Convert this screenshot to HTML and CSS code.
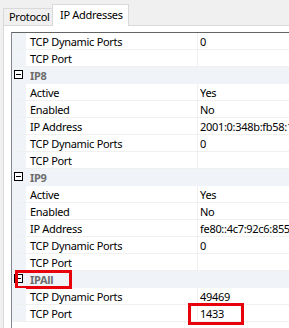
FILE: index.html
```html
<!DOCTYPE html>
<html>
<head>
<meta charset="utf-8">
<link rel="stylesheet" href="styles.css">
</head>
<body>
<div class="tabs">
  <div class="tab">Protocol</div>
  <div class="tab active">IP Addresses</div>
</div>
<div class="panel">
  <div class="grid">
    <div class="row"><div class="margin"></div><div class="name">TCP Dynamic Ports</div><div class="value">0</div></div>
    <div class="row"><div class="margin"></div><div class="name">TCP Port</div><div class="value"></div></div>
    <div class="row cat"><div class="margin"><span class="minus"></span></div><div class="name">IP8</div></div>
    <div class="row"><div class="margin"></div><div class="name">Active</div><div class="value">Yes</div></div>
    <div class="row"><div class="margin"></div><div class="name">Enabled</div><div class="value">No</div></div>
    <div class="row"><div class="margin"></div><div class="name">IP Address</div><div class="value">2001:0:348b:fb58:1c3a</div></div>
    <div class="row"><div class="margin"></div><div class="name">TCP Dynamic Ports</div><div class="value">0</div></div>
    <div class="row"><div class="margin"></div><div class="name">TCP Port</div><div class="value"></div></div>
    <div class="row cat"><div class="margin"><span class="minus"></span></div><div class="name">IP9</div></div>
    <div class="row"><div class="margin"></div><div class="name">Active</div><div class="value">Yes</div></div>
    <div class="row"><div class="margin"></div><div class="name">Enabled</div><div class="value">No</div></div>
    <div class="row"><div class="margin"></div><div class="name">IP Address</div><div class="value">fe80::4c7:92c6:8559</div></div>
    <div class="row"><div class="margin"></div><div class="name">TCP Dynamic Ports</div><div class="value">0</div></div>
    <div class="row"><div class="margin"></div><div class="name">TCP Port</div><div class="value"></div></div>
    <div class="row cat"><div class="margin"><span class="minus"></span></div><div class="name">IPAll</div><span class="hl hl-cat"></span></div>
    <div class="row"><div class="margin"></div><div class="name">TCP Dynamic Ports</div><div class="value">49469</div></div>
    <div class="row"><div class="margin"></div><div class="name">TCP Port</div><div class="value">1433</div><span class="hl hl-val"></span></div>
  </div>
</div>
</body>
</html>
```
FILE: styles.css
```css
* { box-sizing: border-box; }
html, body { margin: 0; padding: 0; }
body {
  width: 289px;
  height: 328px;
  overflow: hidden;
  background: #f0f0f0;
  font-family: "Noto Sans", sans-serif;
  font-size: 11px;
  letter-spacing: -0.3px;
  color: #000;
}
.tabs {
  display: flex;
  align-items: flex-end;
  height: 25px;
  padding-left: 3px;
}
.tab {
  width: 49px;
  height: 17px;
  padding-left: 5px;
  border: 1px solid #d9d9d9;
  border-bottom: none;
  border-right: none;
  line-height: 15px;
  background: #f0f0f0;
  white-space: nowrap;
}
.tab.active {
  width: 77px;
  height: 22px;
  background: #fff;
  line-height: 20px;
  padding-left: 7px;
  margin-bottom: -1px;
  border-right: 1px solid #d9d9d9;
}
.panel {
  margin-left: 3px;
  border-left: 1px solid #d9d9d9;
  border-top: 1px solid #d9d9d9;
  background: #fff;
  padding: 6px 0 0 7px;
  height: 304px;
}
.grid {
  border-left: 1px solid #828790;
  border-top: 1px solid #646464;
  height: 100%;
  overflow: hidden;
}
.row {
  display: flex;
  height: 17px;
  border-bottom: 1px solid #f0f0f0;
  position: relative;
  white-space: nowrap;
}
.margin {
  width: 14px;
  flex: none;
  background: #f0f4f9;
  position: relative;
}
.name {
  width: 171px;
  flex: none;
  padding-left: 4px;
  line-height: 17px;
}
.value {
  flex: 1;
  border-left: 1px solid #f0f0f0;
  padding-left: 2px;
  line-height: 17px;
  overflow: hidden;
}
.row.cat {
  background: #f0f4f9;
  border-bottom-color: #f0f4f9;
}
.row.cat .name {
  color: #6d6d6d;
  font-weight: bold;
}
.minus {
  position: absolute;
  left: 2px;
  top: 3px;
  width: 9px;
  height: 9px;
  border: 1px solid #000;
  background: #fff;
}
.minus::after {
  content: "";
  position: absolute;
  left: 1px;
  top: 3px;
  width: 5px;
  height: 1px;
  background: #000;
}
.hl {
  position: absolute;
  border: 3px solid #e8000b;
}
.hl-cat {
  left: 3px;
  top: -1px;
  width: 57px;
  height: 19px;
}
.hl-val {
  left: 176px;
  top: -2px;
  width: 56px;
  height: 22px;
}
```
